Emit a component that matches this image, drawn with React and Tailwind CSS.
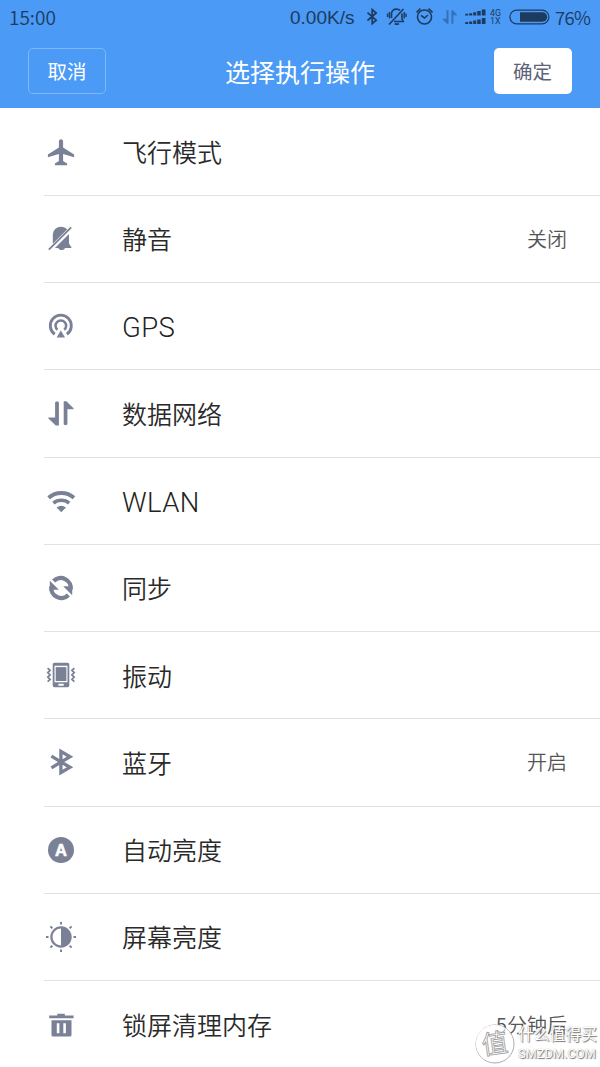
import React from 'react';

function RowIcon({ children }) {
  return (
    <svg className="h-10 w-10 shrink-0 fill-[#7a8197] text-[#7a8197]" viewBox="0 0 40 40">
      {children}
    </svg>
  );
}

const icons = {
  plane: (
    <path d="M20 7.200c1.300 0 2.100 1.100 2.100 2.600v5.600l11 7v2.800l-11-3.300v7.200l4 2.500v1.600H13.900v-1.600l4-2.500v-7.200l-11 3.300v-2.800l11-7V9.800c0-1.500.8-2.600 2.100-2.600z" />
  ),
  mute: (
    <>
      <path d="M11.800 24.800V16.500c0-5 3.300-8.700 8-8.700 2.700 0 4.900 1.100 6.300 2.700z" />
      <path d="M13.900 28.900 28 14.900v9c0 1.800 2.500 3 2.500 5h-6.500c-.6 1.500-1.800 2.100-3.300 2.100s-2.800-.6-3.400-2.100z" />
      <path d="m7.200 30 22.300-22.300 1.300 1.200L8.500 31.200z" />
    </>
  ),
  gps: (
    <>
      <g fill="none" stroke="currentColor" strokeWidth="2.900">
        <path d="M13.700 28.200a10.500 10.500 0 1 1 12.200 0" />
        <path d="M16.500 23.800a5.300 5.300 0 1 1 6.700 0" strokeWidth="2.500" />
      </g>
      <path d="m19.800 24.500 4.200 7.100h-8.400z" />
    </>
  ),
  data: (
    <>
      <path d="M14.100 9.500c0-1.500 3.800-1.500 3.800 0V32.400h-3.100L7.400 25.500v-1h6.700z" />
      <path d="M22.700 8.200h2.700l7.100 7v1h-6.100v14.900c0 1.500-3.700 1.500-3.700 0z" />
    </>
  ),
  wifi: (
    <>
      <g fill="none" stroke="currentColor" strokeWidth="3.900">
        <path d="M7.600 16.700a19.500 19.500 0 0 1 25.400 0" />
        <path d="M12.400 22.100a12.500 12.500 0 0 1 15.800 0" strokeWidth="3.600" />
      </g>
      <path d="M15.600 26.400q4.700-3.300 9.400 0l-4.700 4.900z" />
    </>
  ),
  sync: (
    <>
      <g fill="none" stroke="currentColor" strokeWidth="4.300">
        <path d="M12.600 13.100A10 10 0 0 1 29.700 21.500" />
        <path d="M27.400 26.900A10 10 0 0 1 10.300 18.500" />
      </g>
      <path d="M22.200 18.300h9v9zM17.800 21.700h-9v-9z" />
    </>
  ),
  vibrate: (
    <>
      <path
        fillRule="evenodd"
        d="M13.400 7.700h13.200q1.700 0 1.700 1.700v21.200q0 1.700-1.700 1.700H13.400q-1.700 0-1.700-1.700V9.400q0-1.700 1.700-1.700zM13.500 10.800v16.500h13V10.800zM17.400 28.800v1.900h5.300v-1.900z"
      />
      <path d="M14.700 12.100h10.700V26H14.700z" />
      <path
        fill="none"
        stroke="currentColor"
        strokeWidth="1.700"
        d="m6.600 13.200 2.500 2.200-2.300 2.200 2.300 2.300-2.300 2.200 2.300 2.300-2.500 2.200M33.400 13.200l-2.500 2.200 2.300 2.200-2.300 2.300 2.300 2.200-2.300 2.300 2.500 2.200"
      />
    </>
  ),
  bluetooth: (
    <path
      fill="none"
      stroke="currentColor"
      strokeWidth="3.300"
      d="M10.400 14.200 29 25.300l-9.100 5.300V9.400l9.100 5.300L10.400 25.800"
    />
  ),
  auto: (
    <>
      <circle cx="20" cy="20" r="13" />
      <text
        x="20"
        y="25.600"
        textAnchor="middle"
        className="fill-white stroke-white font-['Liberation_Sans',sans-serif] text-[16.500px] font-bold"
        strokeWidth=".6"
      >
        A
      </text>
    </>
  ),
  brightness: (
    <>
      <circle cx="20" cy="20" r="9.600" fill="none" stroke="currentColor" strokeWidth="2.200" />
      <path d="M20 10a10 10 0 0 1 0 20z" />
      <path
        stroke="currentColor"
        strokeWidth="2"
        d="M20 5v2.500M20 32.500v2.500M5 20h2.500M32.500 20h2.500M9.400 9.400l2 2M28.600 28.600l2 2M9.400 30.600l2-2M28.600 11.400l2-2"
      />
    </>
  ),
  trash: (
    <>
      <path d="M16.300 8.700h7.500v1.700h8.800v2.900H8.200v-2.900h8.100z" />
      <path
        fillRule="evenodd"
        d="M10.500 15.300h20v14.800q0 1.500-1.500 1.500H12q-1.500 0-1.500-1.500zM15.800 18.300v10h2.600v-10zM22.300 18.300v10h2.600v-10z"
      />
    </>
  ),
};

const rows = [
  { icon: 'plane', label: '飞行模式' },
  { icon: 'mute', label: '静音', value: '关闭' },
  { icon: 'gps', label: 'GPS', latin: true },
  { icon: 'data', label: '数据网络' },
  { icon: 'wifi', label: 'WLAN', latin: true },
  { icon: 'sync', label: '同步' },
  { icon: 'vibrate', label: '振动' },
  { icon: 'bluetooth', label: '蓝牙', value: '开启' },
  { icon: 'auto', label: '自动亮度' },
  { icon: 'brightness', label: '屏幕亮度' },
  { icon: 'trash', label: '锁屏清理内存', value: '5分钟后' },
];

function StatusBar() {
  return (
    <div className="flex h-9 items-center pl-[9px] text-[19px] leading-9 whitespace-nowrap text-[#1d3a5f]">
      <span className="w-[281px] pb-[2px] font-[350]">15:00</span>
      <span className="w-[75px] font-['Liberation_Sans',sans-serif] text-[19px]">
        0.00K/s
      </span>
      <svg className="h-9 w-[138px] shrink-0" viewBox="365 0 138 36" fill="none" stroke="currentColor">
        <path strokeWidth="1.700" d="m367.500 12.700 8.700 7.500-4 3.400V9.600l4 3.400-8.700 7.500" />
        <g strokeWidth="1.600">
          <path d="m389 24.500 14.500-15.500M391.500 18v-4.200c0-2.900 2.200-4.700 5-4.700 1.600 0 2.700.4 3.600 1.300M402 13.500v5.500l1.300 2.500H394M394.800 23.500q2 1.500 4 0" />
          <path strokeWidth="1.400" d="M389.500 12v6.500M387.600 13.500v3.500M404.200 12v6.500M406 13.500v3.500" />
        </g>
        <g strokeWidth="1.600">
          <circle cx="424.500" cy="17" r="7" />
          <path d="m421 15.300 3.500 2.700 3.500-3M416.500 12.300l4-3.600M432.500 12.300l-4-3.600" />
        </g>
        <g className="fill-[#3471b9]" stroke="none">
          <path d="M446.500 10.200h2v13.600h-1.500l-4.400-4.300v-.8h3.900zM451.400 10.200h1.500l4 4.300v.8h-3.500v8.500h-2z" />
        </g>
        <g fill="currentColor" stroke="none">
          <path d="M465.200 13.700h3v1.800h-3zM469.200 13.200h3v2.300h-3zM473.200 12.200h3v3.300h-3zM477.200 11h3.500v4.500h-3.500zM481.800 9.500h3.700v6h-3.700z" />
          <path d="M465.200 22.100h3v1.800h-3zM469.200 21.600h3v2.300h-3zM473.200 20.600h3v3.300h-3zM477.200 19.400h3.500v4.500h-3.500zM481.800 17.900h3.700v6h-3.700z" />
          <text x="490" y="15.700" className="font-['Roboto',sans-serif] text-[8.800px]">4G</text>
          <text x="490" y="24" className="font-['Roboto',sans-serif] text-[8.800px]">1X</text>
        </g>
      </svg>
      <svg className="ml-[5px] h-9 w-[43px] shrink-0" viewBox="508 0 43 36" fill="none" stroke="currentColor">
        <rect x="509.900" y="10.200" width="39" height="13.600" rx="6.800" strokeWidth="1.200" />
        <path
          fill="currentColor"
          stroke="none"
          d="M520 12.300h22.500a4.700 4.700 0 0 1 0 9.400H520z"
        />
      </svg>
      <span className="ml-[4px] pb-[2px] text-[18.500px] font-[350] tracking-[-0.700px]">76%</span>
    </div>
  );
}

function Header() {
  return (
    <header className="h-[108px] shrink-0 bg-[#4a9af6]">
      <StatusBar />
      <div className="flex items-center justify-between px-7 pt-3 text-white">
        <button className="h-[46px] w-[78px] rounded-[5px] border border-[#7eb7fa] text-[19.500px]">
          取消
        </button>
        <h1 className="text-[25px] leading-[46px]">选择执行操作</h1>
        <button className="h-[46px] w-[78px] rounded-[5px] bg-white pr-px text-[19.500px] text-[#5d6379]">
          确定
        </button>
      </div>
    </header>
  );
}

function Row({ icon, label, value, latin, last }) {
  return (
    <li className="h-[87.250px] shrink-0">
      <div
        className={
          last
            ? 'ml-[44px] flex h-full items-center'
            : 'ml-[44px] flex h-full items-center border-b border-[#e2e2e2]'
        }
      >
        <div className="-ml-[3px] flex w-[81px]">
          <RowIcon>{icons[icon]}</RowIcon>
        </div>
        <span
          className={
            latin
              ? "pt-[3px] font-['Roboto',sans-serif] text-[27.500px] font-light tracking-[0.400px] text-[#222]"
              : 'pb-px text-[25px] leading-[36px] font-[350] text-[#2a2a2a]'
          }
        >
          {label}
        </span>
        {value && (
          <span className="mr-[33px] ml-auto text-[20px] font-[350] text-[#555]">{value}</span>
        )}
      </div>
    </li>
  );
}

function Watermark() {
  return (
    <div className="absolute right-[3px] bottom-[2px] flex items-center gap-px text-white">
      <svg className="h-[42px] w-[42px]" viewBox="0 0 42 42">
        <circle cx="20" cy="21" r="19" className="fill-white/60 stroke-[#aaa]" strokeWidth="1" />
        <circle cx="19.500" cy="20.500" r="18" fill="none" stroke="white" strokeWidth="1.200" />
        <text
          x="20"
          y="30"
          textAnchor="middle"
          className="fill-white stroke-[#999] text-[26px]"
          strokeWidth=".8"
          transform="rotate(-8 20 21)"
        >
          值
        </text>
      </svg>
      <div className="w-[79px] whitespace-nowrap [text-shadow:1px_1px_1px_#777,0_0_1px_#999]">
        <div className="text-[15.800px] leading-[20px]">什么值得买</div>
        <div className="font-['Roboto',sans-serif] text-[12.800px] leading-[20px]">SMZDM.COM</div>
      </div>
    </div>
  );
}

export default function App() {
  return (
    <div className="relative flex h-[1067px] w-[600px] flex-col overflow-hidden bg-white font-['Noto_Sans_CJK_SC',sans-serif]">
      <Header />
      <ul className="flex flex-col pt-[0.600px]">
        {rows.map((row, i) => (
          <Row key={row.icon} {...row} last={i === rows.length - 1} />
        ))}
      </ul>
      <Watermark />
    </div>
  );
}
